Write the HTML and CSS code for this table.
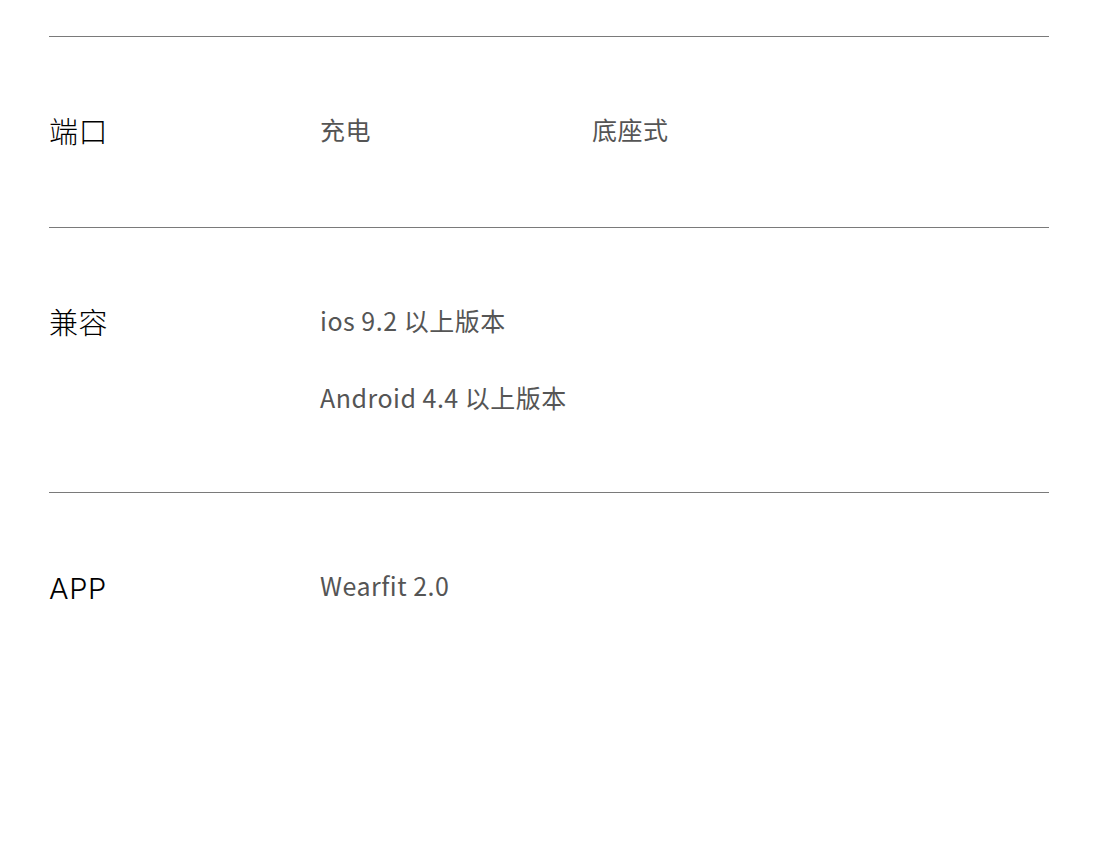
FILE: index.html
```html
<!DOCTYPE html>
<html lang="zh-CN">
<head>
<meta charset="utf-8">
<link rel="stylesheet" href="styles.css">
</head>
<body>
<div class="specs">
  <div class="row">
    <div class="label">端口</div>
    <div class="values cols">
      <div class="val">充电</div>
      <div class="val">底座式</div>
    </div>
  </div>
  <div class="row">
    <div class="label">兼容</div>
    <div class="values">
      <div class="val">ios 9.2 以上版本</div>
      <div class="val">Android 4.4 以上版本</div>
    </div>
  </div>
  <div class="row last">
    <div class="label">APP</div>
    <div class="values">
      <div class="val">Wearfit 2.0</div>
    </div>
  </div>
</div>
</body>
</html>
```

FILE: styles.css
```css
html, body {
  margin: 0;
  padding: 0;
  background: #fff;
}
.specs {
  width: 1000px;
  margin-left: 49px;
  padding-top: 36px;
}
.row {
  display: flex;
  align-items: flex-start;
  border-top: 1px solid #7a7a7a;
  padding: 77px 0 80px;
}
.row.last {
  padding-bottom: 220px;
}
.label {
  width: 271px;
  flex: none;
  margin-top: 4px;
  font-family: "Inter", "Noto Sans CJK SC", "Noto Sans", sans-serif;
  font-weight: 300;
  font-size: 29px;
  letter-spacing: 0.6px;
  line-height: 29px;
  color: #000;
}
.values {
  display: flex;
  flex-direction: column;
  gap: 47px;
}
.values.cols {
  flex-direction: row;
  gap: 0;
}
.values.cols .val {
  width: 272px;
}
.val {
  font-family: "Noto Sans CJK SC", "Noto Sans", sans-serif;
  font-size: 25px;
  letter-spacing: 0.5px;
  line-height: 30px;
  color: #555;
}
```
